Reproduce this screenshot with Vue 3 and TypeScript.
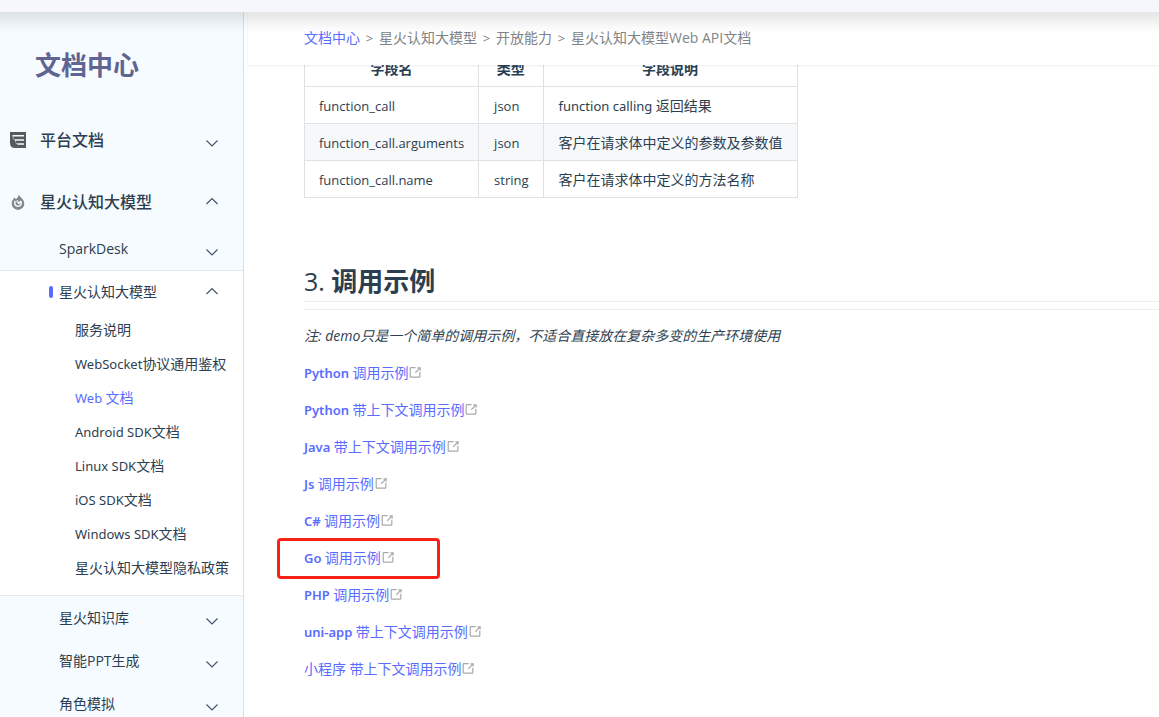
<script setup lang="ts">
interface Row { name: string; type: string; desc: string }

const crumbs: string[] = ['星火认知大模型', '开放能力', '星火认知大模型Web API文档']
const docs: string[] = [
  '服务说明',
  'WebSocket协议通用鉴权',
  'Web 文档',
  'Android SDK文档',
  'Linux SDK文档',
  'iOS SDK文档',
  'Windows SDK文档',
  '星火认知大模型隐私政策',
]
const activeDoc = 'Web 文档'
const more: string[] = ['星火知识库', '智能PPT生成', '角色模拟']
const rows: Row[] = [
  { name: 'function_call', type: 'json', desc: 'function calling 返回结果' },
  { name: 'function_call.arguments', type: 'json', desc: '客户在请求体中定义的参数及参数值' },
  { name: 'function_call.name', type: 'string', desc: '客户在请求体中定义的方法名称' },
]
const demos: string[] = [
  'Python 调用示例',
  'Python 带上下文调用示例',
  'Java 带上下文调用示例',
  'Js 调用示例',
  'C# 调用示例',
  'Go 调用示例',
  'PHP 调用示例',
  'uni-app 带上下文调用示例',
  '小程序 带上下文调用示例',
]
const marked = 'Go 调用示例'

interface Part { text: string; latin: boolean }
function parts(text: string): Part[] {
  return (text.match(/[\x20-\x7e]+|[^\x20-\x7e]+/g) ?? []).map((t) => ({
    text: t,
    latin: /^[\x20-\x7e]/.test(t),
  }))
}
</script>

<template>
  <div class="page">
    <div class="topbar"></div>
    <div class="body">
      <aside class="sidebar">
        <h1 class="title">文档中心</h1>
        <nav>
          <button type="button" class="group">
            <svg class="icon" viewBox="0 0 16 16" width="16" height="16" aria-hidden="true">
              <path fill="#555a5f" d="M0 0H16V16H5Q0 16 0 11Z" />
              <path fill="none" stroke="#f5fbff" stroke-width="1.600" d="M2.500 3.800H14M5 8H14M7.500 12H14" />
              <path fill="none" stroke="#f5fbff" stroke-opacity=".6" stroke-width=".8" d="M3 4V5.500Q3 8 5.500 8M5.500 8V9.500Q5.500 12 8 12" />
            </svg>
            <span class="label">平台文档</span>
            <svg class="chev" viewBox="0 0 12 16" width="12" height="16" aria-hidden="true"><path d="M.5 8.500L6 14L11.500 8.500" /></svg>
          </button>
          <button type="button" class="group">
            <svg class="icon" viewBox="0 0 16 16" width="16" height="16" aria-hidden="true">
              <path fill="#858789" d="M8.500 .5C9.500 3 14.300 4.800 14.300 9.700A6.300 6.200 0 0 1 1.700 9.700C1.700 6.500 3.500 5.300 4.500 3.500L5.800 5C7.500 4 8.500 2.500 8.500 .5Z" />
              <path fill="none" stroke="#f5fbff" stroke-width="1.500" stroke-linejoin="round" d="M5.300 6.800C3.800 9.500 5.300 12.300 8 12.300S12 9.500 10.800 7.300L8.800 9.500L6.800 6.500" />
            </svg>
            <span class="label">星火认知大模型</span>
            <svg class="chev" viewBox="0 0 12 16" width="12" height="16" aria-hidden="true"><path d="M.5 10L6 4.500L11.500 10" /></svg>
          </button>
          <button type="button" class="item">
            <span class="label">SparkDesk</span>
            <svg class="chev" viewBox="0 0 12 16" width="12" height="16" aria-hidden="true"><path d="M.5 8.500L6 14L11.500 8.500" /></svg>
          </button>
          <div class="open">
            <button type="button" class="item current">
              <span class="label">星火认知大模型</span>
              <svg class="chev" viewBox="0 0 12 16" width="12" height="16" aria-hidden="true"><path d="M.5 10L6 4.500L11.500 10" /></svg>
            </button>
            <a v-for="d in docs" :key="d" href="#" class="doc" :class="{ active: d === activeDoc }"><span v-for="(p, i) in parts(d)" :key="i" :class="{ latin: p.latin }">{{ p.text }}</span></a>
          </div>
          <button v-for="m in more" :key="m" type="button" class="item">
            <span class="label">{{ m }}</span>
            <svg class="chev" viewBox="0 0 12 16" width="12" height="16" aria-hidden="true"><path d="M.5 8.500L6 14L11.500 8.500" /></svg>
          </button>
        </nav>
      </aside>
      <main class="main">
        <nav class="crumbs">
          <a href="#">文档中心</a>
          <template v-for="c in crumbs" :key="c"><span class="sep">&gt;</span><span><span v-for="(p, i) in parts(c)" :key="i" :class="{ latin: p.latin }">{{ p.text }}</span></span></template>
        </nav>
        <div class="view">
          <article class="content">
            <table>
              <thead>
                <tr><th>字段名</th><th>类型</th><th>字段说明</th></tr>
              </thead>
              <tbody>
                <tr v-for="r in rows" :key="r.name">
                  <td class="latin">{{ r.name }}</td>
                  <td class="latin">{{ r.type }}</td>
                  <td><span v-for="(p, i) in parts(r.desc)" :key="i" :class="{ latin: p.latin }">{{ p.text }}</span></td>
                </tr>
              </tbody>
            </table>
            <h2><span class="num">3. </span>调用示例</h2>
            <hr />
            <p class="note"><em>注: demo只是一个简单的调用示例，不适合直接放在复杂多变的生产环境使用</em></p>
            <p v-for="d in demos" :key="d" class="demo" :class="{ marked: d === marked }">
              <a href="#"><span v-for="(p, i) in parts(d)" :key="i" :class="{ latin: p.latin }">{{ p.text }}</span><svg class="out" viewBox="0 0 100 100" width="15" height="15" aria-hidden="true">
                <path d="M18.800 85.100h56a8 8 0 0 0 8-8v-32h-8v32h-56v-56h32v-8h-32a8 8 0 0 0-8 8v56a8 8 0 0 0 8 8z" />
                <polygon points="45.700,48.700 51.300,54.300 77.200,28.500 77.200,37.200 85.200,37.200 85.200,14.900 62.800,14.900 62.800,22.900 71.500,22.900" />
              </svg></a>
            </p>
          </article>
        </div>
      </main>
    </div>
  </div>
</template>

<style>
html, body { overflow: hidden; background: #fff; }
</style>

<style scoped>
.page {
  height: 100vh;
  display: flex;
  flex-direction: column;
  overflow: hidden;
  color: #2c3e50;
  font: 14px/20px "Open Sans", "Noto Sans CJK SC", sans-serif;
}
.topbar {
  position: relative;
  z-index: 5;
  flex: none;
  height: 12px;
  background: #f6f7fc;
}
.topbar::after {
  content: "";
  position: absolute;
  top: 100%;
  left: 0;
  right: 0;
  height: 22px;
  background: linear-gradient(rgba(0, 0, 0, 0.1), rgba(0, 0, 0, 0.07) 30%, rgba(0, 0, 0, 0.02) 70%, transparent);
  pointer-events: none;
}
.body { flex: 1; min-height: 0; display: flex; }
.sidebar {
  flex: none;
  box-sizing: border-box;
  width: 244px;
  overflow: hidden;
  background: #f5fbff;
  border-right: 1px solid #d5dfe9;
}
.title {
  margin: 0;
  padding: 35px 0 32px 35px;
  color: #5f6590;
  font-size: 26px;
  line-height: 36px;
}
button {
  display: flex;
  align-items: center;
  width: 100%;
  border: 0;
  margin: 0;
  background: none;
  color: inherit;
  font: inherit;
  text-align: left;
}
.group { height: 50px; padding: 0 25px 0 10px; margin-bottom: 12px; font-size: 16px; font-weight: 500; }
.group + .group { margin-bottom: 0; }
.group .label { margin-left: 14px; }
.item { height: 43px; padding: 0 25px 0 59px; }
.label { flex: 1; }
.chev { flex: none; fill: none; stroke: #44546a; stroke-width: 1.2; }
.open { background: #fff; border-top: 1px solid #e3ebf2; border-bottom: 1px solid #e3ebf2; padding-bottom: 10px; }
.current { padding-left: 49px; height: 42px; }
.current::before { content: ""; width: 4px; height: 12px; margin-right: 6px; border-radius: 2px; background: #596cff; }
.doc { display: block; padding-left: 75px; line-height: 34px; color: inherit; text-decoration: none; white-space: nowrap; }
.active { color: #596cff; }
.latin { font-family: "Noto Sans", sans-serif; font-size: 13px; white-space: pre; }
td.latin { font-family: "Open Sans", sans-serif; }
.crumbs .latin { font-family: "Open Sans", sans-serif; font-size: 14px; }
.main { flex: 1; min-width: 0; display: flex; flex-direction: column; }
.crumbs {
  position: relative;
  z-index: 2;
  flex: none;
  box-sizing: border-box;
  display: flex;
  height: 53px;
  margin-left: 4px;
  padding: 0 0 2px 56px;
  align-items: center;
  background: #fff;
  box-shadow: 0 1px 2px rgba(0, 0, 0, 0.08);
  color: #808488;
  white-space: nowrap;
}
.sep { width: 19px; text-align: center; font-size: 13px; }
a { color: #596cff; text-decoration: none; }
.view { flex: 1; min-height: 0; overflow: hidden; }
.content { margin-top: -16px; padding-left: 60px; }
table { border-collapse: collapse; }
th, td { border: 1px solid #dfe2e5; padding: 9px 14px 7px; height: 20px; line-height: 20px; text-align: left; }
td:nth-child(n + 2) { padding-left: 15px; }
th { text-align: center; }
tbody tr:nth-child(2) { background: #f6f8fa; }
h2 { margin: 63px 0 0; border-bottom: 1px solid #eaecef; font-size: 26px; line-height: 40px; }
.num { font-weight: 400; font-size: 25px; }
hr { margin: 7px 0 0; border: 0; border-top: 1px solid #eaecef; }
p { position: relative; margin: 0 0 17px; line-height: 20px; }
.note { margin-top: 16px; }
.demo .latin { font-weight: 600; }
.out { fill: #aaa; vertical-align: -2px; }
.marked::after {
  content: "";
  position: absolute;
  left: -27px;
  top: -10px;
  box-sizing: border-box;
  width: 163px;
  height: 41px;
  border: 3px solid #fb2015;
  border-radius: 4px;
  pointer-events: none;
}
</style>
